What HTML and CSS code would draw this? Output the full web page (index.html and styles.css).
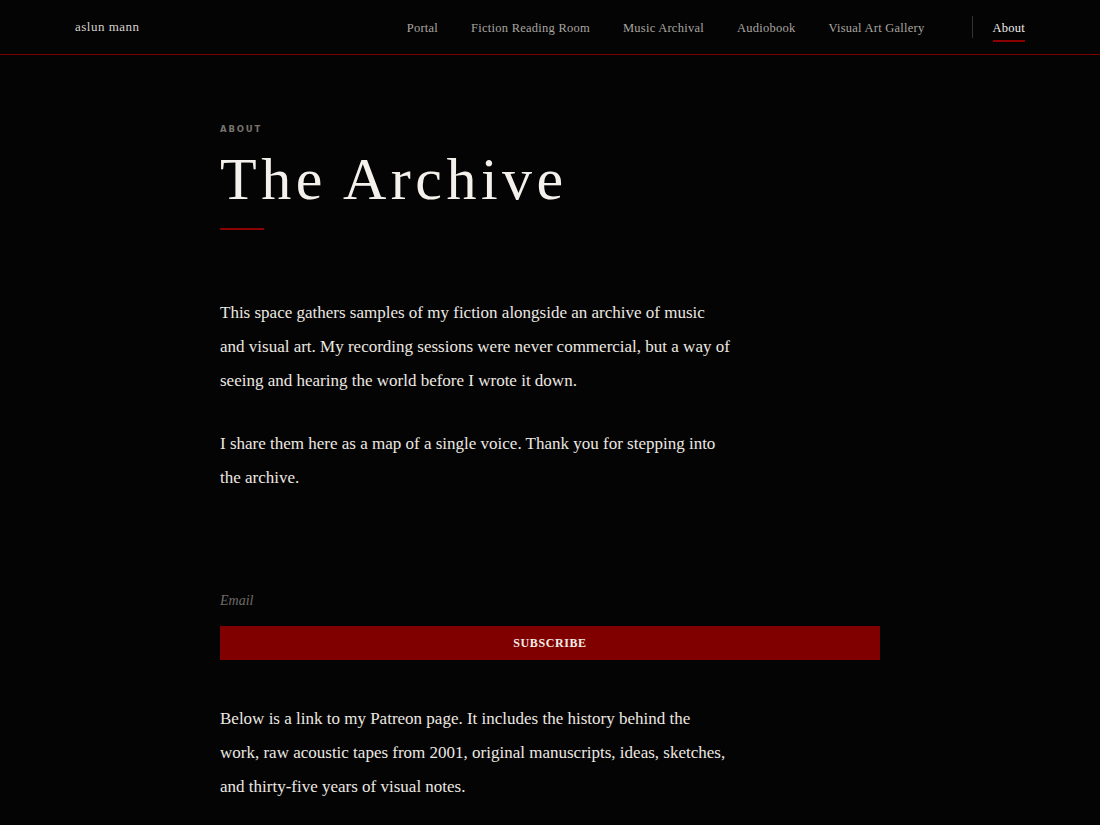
FILE: index.html
```html
<!DOCTYPE html>
<html lang="en">
<head>
  <meta charset="UTF-8" />
  <meta name="viewport" content="width=device-width, initial-scale=1.0" />
  <title>About – aslun mann</title>
  <link rel="stylesheet" href="styles.css">
</head>
<body>
  <!-- HEADER -->
  <header class="site-header">
    <a class="logo" href="#">aslun mann</a>
    <nav class="main-nav">
      <a href="#">Portal</a>
      <a href="#">Fiction Reading Room</a>
      <a href="#">Music Archival</a>
      <a href="#">Audiobook</a>
      <a href="#">Visual Art Gallery</a>
      <span class="nav-divider"></span>
      <a href="#" class="active">About</a>
    </nav>
  </header>

  <!-- ABOUT -->
  <main class="page">
    <section class="intro">
      <div class="eyebrow">About</div>
      <h1>The Archive</h1>
      <div class="rule"></div>
    </section>

    <section class="prose">
      <p>This space gathers samples of my fiction alongside an archive of music and visual art. My recording sessions were never commercial, but a way of seeing and hearing the world before I wrote it down.</p>
      <p>I share them here as a map of a single voice. Thank you for stepping into the archive.</p>
    </section>

    <!-- NEWSLETTER -->
    <form class="subscribe" onsubmit="return false;">
      <input type="email" name="email" placeholder="Email" />
      <button type="submit">Subscribe</button>
    </form>

    <section class="prose">
      <p>Below is a link to my Patreon page. It includes the history behind the work, raw acoustic tapes from 2001, original manuscripts, ideas, sketches, and thirty-five years of visual notes.</p>
    </section>
  </main>
</body>
</html>
```

FILE: styles.css
```css
/* GLOBAL */
body { margin:0; padding:0; background:#040404; color:#e8e4e0; font-family:'Liberation Serif', 'DejaVu Serif', serif; }
a { text-decoration:none; color:inherit; }

/* HEADER */
.site-header { display:flex; align-items:center; justify-content:space-between; height:54px; padding:0 75px; border-bottom:1px solid #7a0000; }
.logo { font-size:13px; letter-spacing:0.5px; color:#d6d2cc; margin-top:-1px; }
.main-nav { display:flex; align-items:center; gap:33px; }
.main-nav a { font-size:12.5px; letter-spacing:0.25px; color:#a9a5a0; padding:4px 0; border-bottom:2px solid transparent; margin-top:5px; }
.main-nav a.active { color:#f2efea; border-bottom-color:#8b0000; }
.nav-divider { width:1px; height:22px; background:#333; margin:0 -13px 0 14px; }

/* INTRO */
.page { width:660px; margin:0 auto; padding:69px 0 20px; }
.eyebrow { font-family:'DejaVu Sans', sans-serif; font-size:8.5px; font-weight:bold; letter-spacing:1.8px; text-transform:uppercase; color:#77736f; }
h1 { margin:12px 0 0; font-size:60px; font-weight:normal; letter-spacing:4.5px; line-height:66px; color:#f4f1ec; }
.rule { width:44px; height:2px; background:#8b0000; margin-top:16px; }

/* PROSE */
.prose { max-width:512px; }
.intro + .prose { margin-top:66px; }
.prose p { font-size:17px; line-height:34px; margin:0 0 29px; color:#ece8e2; }

/* SUBSCRIBE */
.subscribe { display:flex; flex-direction:column; margin:94px 0 42px; }
.subscribe input { background:transparent; border:none; padding:0; height:24px; font-family:inherit; font-size:14px; font-style:italic; color:#ddd; outline:none; }
.subscribe input::placeholder { color:#6f6b67; }
.subscribe button { margin-top:13px; height:34px; border:none; background:#800000; color:#f3ece8; font-family:inherit; font-size:12px; font-weight:bold; letter-spacing:0.6px; text-transform:uppercase; cursor:pointer; }
```
